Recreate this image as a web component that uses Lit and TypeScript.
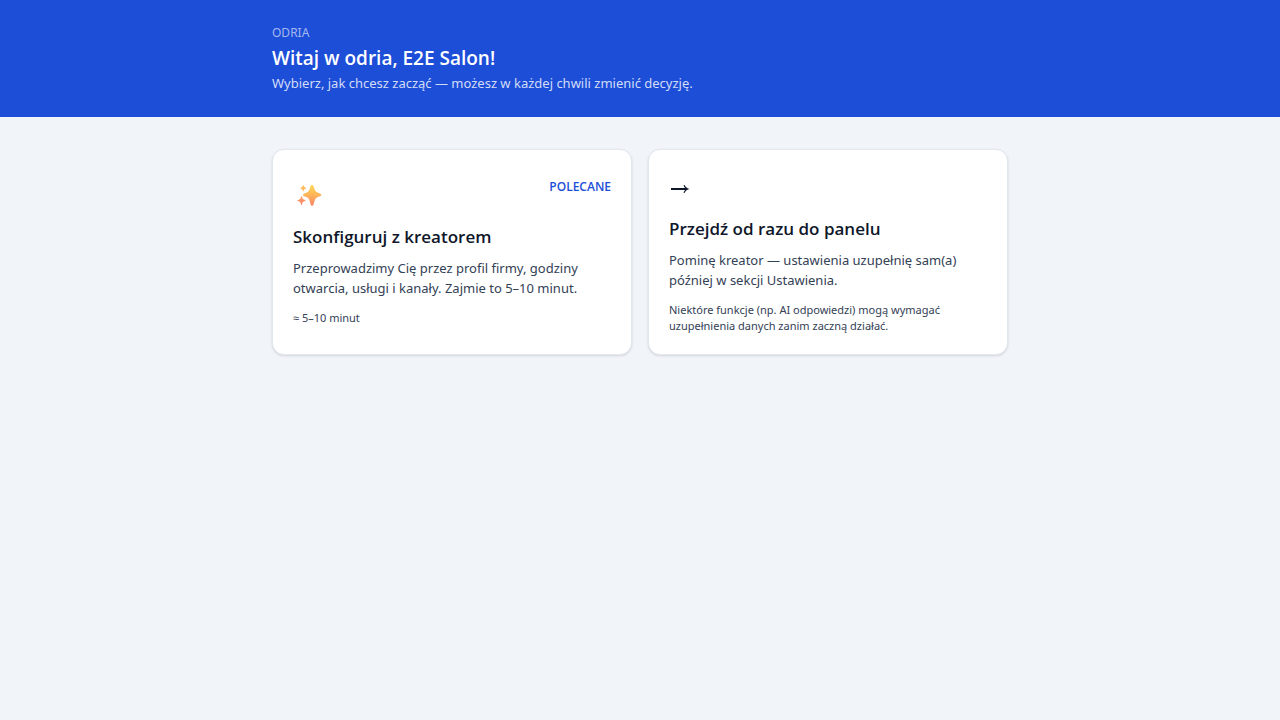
import { LitElement, html, css, nothing, type TemplateResult } from "lit";
import { customElement, property } from "lit/decorators.js";

const sparkles = html`
  <svg class="icon" width="32" height="32" viewBox="0 0 32 32" aria-hidden="true">
    <defs>
      <linearGradient id="warm" x1="0" y1="0" x2="0" y2="1">
        <stop offset="0" stop-color="#fdd755" />
        <stop offset="0.5" stop-color="#feb35a" />
        <stop offset="1" stop-color="#fb8468" />
      </linearGradient>
      <linearGradient id="coral" x1="0" y1="0" x2="0" y2="1">
        <stop offset="0" stop-color="#fea45f" />
        <stop offset="1" stop-color="#fb7f6c" />
      </linearGradient>
    </defs>
    <path fill="url(#warm)" d="M17.600 8.200C18.100 6.500 20 6.500 20.500 8.200L21.900 12Q22.600 13.800 24.400 14.500L27.600 15.700Q29.200 16.900 27.600 18.100L24.400 19.300Q22.600 20 21.900 21.800L20.500 26.400C20 28.200 18.100 28.200 17.600 26.400L16.300 21.800Q15.700 20 14 19.300L10.700 18.100Q9 16.900 10.700 15.700L14 14.500Q15.700 13.800 16.300 12Z" />
    <path fill="#fdb95a" d="M10.200 7L11.300 9.100L13.500 10.200L11.300 11.300L10.200 13.800L9.100 11.300L7 10.200L9.100 9.100Z" />
    <path fill="url(#coral)" d="M8.500 17.800L9.800 21L13 22.500L9.800 24L8.500 27.600L7.200 24L4 22.500L7.200 21Z" />
  </svg>
`;

const arrow = html`
  <svg class="icon" width="32" height="32" viewBox="0 0 32 32" aria-hidden="true">
    <path d="M2 19H18" fill="none" stroke="#0f172a" stroke-width="2" />
    <path d="M15 15.200Q16 18 18.800 19Q16 20 15 22.800" fill="none" stroke="#0f172a" stroke-width="1.200" />
  </svg>
`;

@customElement("choice-card")
export class ChoiceCard extends LitElement {
  @property() heading = "";
  @property() text = "";
  @property() note = "";
  @property() badge = "";
  @property({ attribute: false }) icon: TemplateResult | typeof nothing = nothing;

  static styles = css`
    :host {
      display: grid;
    }
    .card {
      box-sizing: border-box;
      width: 100%;
      margin: 0;
      padding: 20px;
      border: 1px solid #e2e8f0;
      border-radius: 12px;
      background: #fff;
      box-shadow: 0 1px 3px rgb(0 0 0 / 0.1), 0 1px 2px -1px rgb(0 0 0 / 0.1);
      color: #0f172a;
      font: inherit;
      text-align: left;
      cursor: pointer;
    }
    .top {
      display: flex;
      align-items: flex-start;
      justify-content: space-between;
      margin-bottom: 12px;
    }
    .icon {
      display: block;
    }
    .badge {
      color: #1d4ed8;
      font-family: "Open Sans", sans-serif;
      font-size: 12px;
      line-height: 18px;
      font-weight: 600;
    }
    .heading {
      display: block;
      margin-bottom: 6px;
      font-family: "Open Sans", sans-serif;
      font-size: 17px;
      line-height: 30px;
      font-weight: 600;
    }
    .text {
      display: block;
      margin-bottom: 12px;
      color: #334155;
      font-size: 13px;
      line-height: 20px;
    }
    .note {
      display: block;
      color: #334155;
      font-size: 11px;
      line-height: 16px;
    }
  `;

  render() {
    return html`
      <button class="card" type="button">
        <span class="top">
          ${this.icon}
          ${this.badge ? html`<span class="badge">${this.badge}</span>` : nothing}
        </span>
        <span class="heading">${this.heading}</span>
        <span class="text">${this.text}</span>
        <span class="note">${this.note}</span>
      </button>
    `;
  }
}

@customElement("app-root")
export class AppRoot extends LitElement {
  static styles = css`
    :host {
      display: block;
      min-height: 100vh;
      background: #f1f5f9;
      font-family: "Noto Sans", sans-serif;
    }
    .banner {
      padding: 24px 0;
      background: #1d4ed8;
      color: #fff;
    }
    .inner {
      box-sizing: border-box;
      max-width: 768px;
      margin: 0 auto;
      padding: 0 16px;
    }
    .brand {
      margin: 0 0 2px;
      color: #a5b8ef;
      font-size: 12px;
      line-height: 18px;
    }
    .title {
      margin: 0 0 1px;
      font-family: "Open Sans", sans-serif;
      font-size: 19px;
      line-height: 28px;
      font-weight: 600;
    }
    .lead {
      margin: 0;
      color: #d2dcf7;
      font-size: 13px;
      line-height: 20px;
    }
    .choices {
      display: grid;
      grid-template-columns: repeat(auto-fit, minmax(280px, 1fr));
      gap: 16px;
      padding-top: 32px;
      padding-bottom: 32px;
    }
  `;

  render() {
    return html`
      <header class="banner">
        <div class="inner">
          <p class="brand">ODRIA</p>
          <h1 class="title">Witaj w odria, E2E Salon!</h1>
          <p class="lead">Wybierz, jak chcesz zacząć — możesz w każdej chwili zmienić decyzję.</p>
        </div>
      </header>
      <main class="inner choices">
        <choice-card
          .icon=${sparkles}
          badge="POLECANE"
          heading="Skonfiguruj z kreatorem"
          text="Przeprowadzimy Cię przez profil firmy, godziny otwarcia, usługi i kanały. Zajmie to 5–10 minut."
          note="≈ 5–10 minut"
        ></choice-card>
        <choice-card
          .icon=${arrow}
          heading="Przejdź od razu do panelu"
          text="Pominę kreator — ustawienia uzupełnię sam(a) później w sekcji Ustawienia."
          note="Niektóre funkcje (np. AI odpowiedzi) mogą wymagać uzupełnienia danych zanim zaczną działać."
        ></choice-card>
      </main>
    `;
  }
}
